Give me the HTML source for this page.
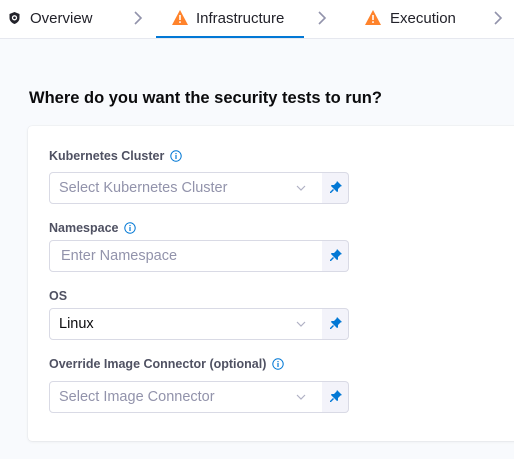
<!DOCTYPE html><html><head><style>
body{margin:0;width:514px;height:459px;overflow:hidden;background:#f8fafd;font-family:"Liberation Sans",sans-serif;position:relative}
.hdr{position:absolute;left:0;top:0;width:514px;height:38px;background:#fff;border-bottom:1px solid #e6e8ef}
.t{position:absolute;top:10px;font-size:15px;color:#22222a}
.chev{position:absolute;top:10px}
.ul{position:absolute;left:156px;top:36px;width:148px;height:2px;background:#0278d5}
h1{position:absolute;left:29px;top:89px;margin:0;font-size:16.5px;font-weight:bold;color:#0b0b0d}
.card{position:absolute;left:28px;top:126px;width:500px;height:315px;background:#fff;border-radius:4px;box-shadow:0 0 1px rgba(0,0,0,.15),0 1px 3px rgba(0,0,0,.06)}
.lb{position:absolute;left:49px;font-size:12.5px;font-weight:bold;color:#4f5162}
.in{position:absolute;left:49px;width:272px;height:30px;border:1px solid #d9dae5;border-radius:4px 0 0 4px;background:#fff;font-size:14.5px;line-height:30px;padding-left:9px;box-sizing:content-box;color:#9293ab}
.pin{position:absolute;left:322px;width:26px;height:30px;border:1px solid #d9dae5;border-left:none;border-radius:0 4px 4px 0;background:#f3f3fa}
.dd{position:absolute;left:296px;width:10px;height:6px}
</style></head><body>
<div class="hdr">
<svg style="position:absolute;left:9px;top:12px" width="11" height="12" viewBox="0 0 11 12"><path d="M5.5 0L10.5 2V6C10.5 9 8 11 5.5 12C3 11 .5 9 .5 6V2Z" fill="#22222a"/><circle cx="5.5" cy="5.8" r="2" fill="none" stroke="#fff" stroke-width="1.3"/></svg>
<div class="t" style="left:30px">Overview</div>
<svg class="chev" style="left:133px" width="10" height="16"><path d="M2 2L8 8L2 14" fill="none" stroke="#9293ab" stroke-width="1.6"/></svg>
<svg style="position:absolute;left:172px;top:10px" width="16" height="15"><path d="M8 0L16 15H0Z" fill="#ff832b"/><rect x="7.2" y="5" width="1.6" height="5" fill="#fff"/><rect x="7.2" y="11.3" width="1.6" height="1.6" fill="#fff"/></svg>
<div class="t" style="left:196px">Infrastructure</div>
<svg class="chev" style="left:317px" width="10" height="16"><path d="M2 2L8 8L2 14" fill="none" stroke="#9293ab" stroke-width="1.6"/></svg>
<svg style="position:absolute;left:365px;top:10px" width="16" height="15"><path d="M8 0L16 15H0Z" fill="#ff832b"/><rect x="7.2" y="5" width="1.6" height="5" fill="#fff"/><rect x="7.2" y="11.3" width="1.6" height="1.6" fill="#fff"/></svg>
<div class="t" style="left:390px">Execution</div>
<svg class="chev" style="left:493px" width="10" height="16"><path d="M2 2L8 8L2 14" fill="none" stroke="#9293ab" stroke-width="1.6"/></svg>
<div class="ul"></div>
</div>
<h1>Where do you want the security tests to run?</h1>
<div class="card"></div>

<div class="lb" style="top:149px">Kubernetes Cluster <svg width="12" height="12" style="vertical-align:-2px;margin-left:2px"><circle cx="6" cy="6" r="5.2" fill="none" stroke="#0278d5" stroke-width="1"/><rect x="5.4" y="5" width="1.2" height="4" fill="#0278d5"/><rect x="5.4" y="3" width="1.2" height="1.2" fill="#0278d5"/></svg></div>
<div class="in" style="top:172px">Select Kubernetes Cluster</div><div class="pin" style="top:172px"></div>
<div class="lb" style="top:221px">Namespace <svg width="12" height="12" style="vertical-align:-2px;margin-left:2px"><circle cx="6" cy="6" r="5.2" fill="none" stroke="#0278d5" stroke-width="1"/><rect x="5.4" y="5" width="1.2" height="4" fill="#0278d5"/><rect x="5.4" y="3" width="1.2" height="1.2" fill="#0278d5"/></svg></div>
<div class="in" style="top:240px;padding-left:11px;width:270px">Enter Namespace</div><div class="pin" style="top:240px"></div>
<div class="lb" style="top:289px">OS</div>
<div class="in" style="top:308px;color:#0b0b0d">Linux</div><div class="pin" style="top:308px"></div>
<div class="lb" style="top:357px">Override Image Connector (optional) <svg width="12" height="12" style="vertical-align:-2px;margin-left:2px"><circle cx="6" cy="6" r="5.2" fill="none" stroke="#0278d5" stroke-width="1"/><rect x="5.4" y="5" width="1.2" height="4" fill="#0278d5"/><rect x="5.4" y="3" width="1.2" height="1.2" fill="#0278d5"/></svg></div>
<div class="in" style="top:381px">Select Image Connector</div><div class="pin" style="top:381px"></div>

<svg class="dd" style="top:185px"><path d="M1 1L5 5L9 1" fill="none" stroke="#b0b1c4" stroke-width="1.2"/></svg>
<svg class="dd" style="top:321px"><path d="M1 1L5 5L9 1" fill="none" stroke="#b0b1c4" stroke-width="1.2"/></svg>
<svg class="dd" style="top:394px"><path d="M1 1L5 5L9 1" fill="none" stroke="#b0b1c4" stroke-width="1.2"/></svg>

<svg style="position:absolute;left:330px;top:181px" width="12" height="12" viewBox="0 0 12 12"><path d="M7 0L12 5L10.5 5.5L8 8L8 10.5L7 11L1 5L1.5 4L4 4L6.5 1.5Z" fill="#0278d5"/><path d="M3.5 8.5L0 12" stroke="#0278d5" stroke-width="1.4"/></svg>
<svg style="position:absolute;left:330px;top:249px" width="12" height="12" viewBox="0 0 12 12"><path d="M7 0L12 5L10.5 5.5L8 8L8 10.5L7 11L1 5L1.5 4L4 4L6.5 1.5Z" fill="#0278d5"/><path d="M3.5 8.5L0 12" stroke="#0278d5" stroke-width="1.4"/></svg>
<svg style="position:absolute;left:330px;top:317px" width="12" height="12" viewBox="0 0 12 12"><path d="M7 0L12 5L10.5 5.5L8 8L8 10.5L7 11L1 5L1.5 4L4 4L6.5 1.5Z" fill="#0278d5"/><path d="M3.5 8.5L0 12" stroke="#0278d5" stroke-width="1.4"/></svg>
<svg style="position:absolute;left:330px;top:390px" width="12" height="12" viewBox="0 0 12 12"><path d="M7 0L12 5L10.5 5.5L8 8L8 10.5L7 11L1 5L1.5 4L4 4L6.5 1.5Z" fill="#0278d5"/><path d="M3.5 8.5L0 12" stroke="#0278d5" stroke-width="1.4"/></svg>
</body></html>
